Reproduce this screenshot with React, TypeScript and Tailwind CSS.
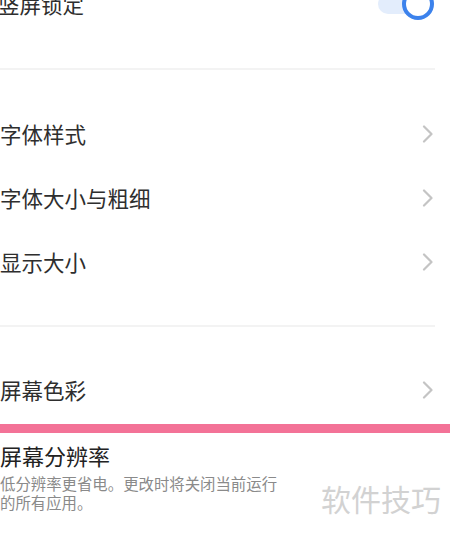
import React from "react";

const Chevron = () => (
  <svg width="12" height="18" viewBox="0 0 12 18" className="shrink-0">
    <path d="M2 1.5 L9.5 9 L2 16.5" fill="none" stroke="#c4c4c4" strokeWidth="2.2" strokeLinecap="round" strokeLinejoin="round" />
  </svg>
);

const Row = ({ label }: { label: string }) => (
  <div className="h-[64px] flex items-center justify-between pr-[16px]">
    <span className="text-[21.5px] leading-[26px] text-[#2e2e2e]">{label}</span>
    <Chevron />
  </div>
);

const Toggle = () => (
  <div className="flex items-center">
    <div className="w-[40px] h-[20px] rounded-l-full bg-[#e3edfc]" />
    <div className="-ml-[16px] w-[32px] h-[32px] rounded-full bg-white border-[4px] border-[#3c82ec]" />
  </div>
);

export default function App() {
  return (
    <div
      className="relative w-[450px] h-[535px] overflow-hidden bg-white flex flex-col"
      style={{ fontFamily: '"Noto Sans CJK SC", "Noto Sans", sans-serif' }}
    >
      <div className="-mt-[16px] h-[40px] shrink-0 flex items-center justify-between pr-[16px] -ml-[2px]">
        <span className="text-[21.5px] leading-[26px] text-[#2e2e2e]">竖屏锁定</span>
        <Toggle />
      </div>
      <div className="mt-[44px] h-[2px] shrink-0 w-[435px] bg-[#f3f3f3]" />
      <div className="mt-[32px] flex flex-col">
        <Row label="字体样式" />
        <Row label="字体大小与粗细" />
        <Row label="显示大小" />
      </div>
      <div className="mt-[31px] h-[2px] shrink-0 w-[435px] bg-[#f3f3f3]" />
      <div className="mt-[31px] flex flex-col">
        <Row label="屏幕色彩" />
      </div>
      <div className="mt-[2px] h-[9px] shrink-0 w-full bg-[#f37297]" />
      <div className="flex flex-1">
        <div className="flex flex-col pt-[9px]">
          <div className="text-[22px] leading-[26px] text-[#222222]">屏幕分辨率</div>
          <div className="mt-[6px] w-[282px] text-[15.4px] leading-[19px] text-[#8a8a8a]">
            低分辨率更省电。更改时将关闭当前运行的所有应用。
          </div>
        </div>
        <div className="flex flex-col pt-[47px] pl-[39px]">
          <div className="text-[30px] leading-[36px] text-[#d2d2d2]">软件技巧</div>
        </div>
      </div>
    </div>
  );
}
